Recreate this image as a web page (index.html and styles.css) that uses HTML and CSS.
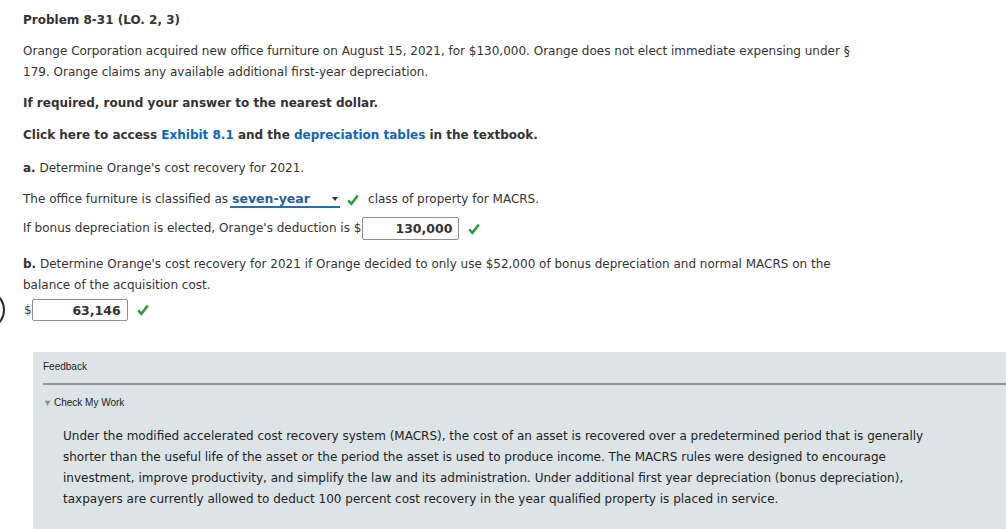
FILE: index.html
```html
<!DOCTYPE html>
<html>
<head>
<meta charset="utf-8">
<link rel="stylesheet" href="styles.css">
</head>
<body>
<div class="edge-circle"></div>
<div class="page">
  <div class="title">Problem 8-31 (LO. 2, 3)</div>
  <p class="para">Orange Corporation acquired new office furniture on August 15, 2021, for $130,000. Orange does not elect immediate expensing under §<br>179. Orange claims any available additional first-year depreciation.</p>
  <p class="bold p-req">If required, round your answer to the nearest dollar.</p>
  <p class="bold p-click">Click here to access <a class="link">Exhibit 8.1</a> and the <a class="link">depreciation tables</a> in the textbook.</p>
  <p class="p-a"><b>a.</b> Determine Orange's cost recovery for 2021.</p>
  <div class="row row-select">
    <span>The office furniture is classified as</span>
    <span class="select"><span class="sel-text">seven-year</span><span class="sel-arrow"></span></span>
    <svg class="check" viewBox="0 0 12 12"><path d="M1.2 6.4 L4.4 9.8 L10.8 1.6" fill="none" stroke="#1f9d3c" stroke-width="2.4"/></svg>
    <span class="after-check">class of property for MACRS.</span>
  </div>
  <div class="row row-bonus">
    <span>If bonus depreciation is elected, Orange's deduction is $</span>
    <span class="input input-a">130,000</span>
    <svg class="check check-b" viewBox="0 0 12 12"><path d="M1.2 6.4 L4.4 9.8 L10.8 1.6" fill="none" stroke="#1f9d3c" stroke-width="2.4"/></svg>
  </div>
  <p class="p-b"><b>b.</b> Determine Orange's cost recovery for 2021 if Orange decided to only use $52,000 of bonus depreciation and normal MACRS on the<br>balance of the acquisition cost.</p>
  <div class="row row-dollar">
    <span class="dollar">$</span>
    <span class="input input-b">63,146</span>
    <svg class="check check-c" viewBox="0 0 12 12"><path d="M1.2 6.4 L4.4 9.8 L10.8 1.6" fill="none" stroke="#1f9d3c" stroke-width="2.4"/></svg>
  </div>
</div>
<div class="feedback">
  <div class="fb-head">Feedback</div>
  <div class="fb-rule"></div>
  <div class="fb-toggle"><span class="tri">▼</span>Check My Work</div>
  <div class="fb-body">Under the modified accelerated cost recovery system (MACRS), the cost of an asset is recovered over a predetermined period that is generally<br>shorter than the useful life of the asset or the period the asset is used to produce income. The MACRS rules were designed to encourage<br>investment, improve productivity, and simplify the law and its administration. Under additional first year depreciation (bonus depreciation),<br>taxpayers are currently allowed to deduct 100 percent cost recovery in the year qualified property is placed in service.</div>
</div>
</body>
</html>
```
FILE: styles.css
```css
html, body {
  margin: 0;
  padding: 0;
  overflow: hidden;
  background: #fff;
}
body {
  font-family: "DejaVu Sans", Verdana, sans-serif;
  font-size: 12px;
  line-height: 21px;
  color: #333;
  position: relative;
  height: 529px;
}
.page {
  padding: 10px 0 0 23px;
}
.title {
  font-weight: bold;
  color: #333;
}
p { margin: 0; }
.para { margin-top: 10px; }
.bold { font-weight: bold; }
.p-req { margin-top: 10px; }
.p-click { margin-top: 11px; }
.link { color: #0a66c2; }
.p-a { margin-top: 12px; }
.row {
  display: flex;
  align-items: center;
}
.row-select {
  margin-top: 10px;
  height: 21px;
}
.select {
  display: inline-flex;
  align-items: center;
  justify-content: space-between;
  width: 110px;
  height: 17px;
  margin-left: 2px;
  border-bottom: 2px solid #2a6db0;
  box-sizing: border-box;
  color: #1d5fa3;
  font-weight: bold;
  font-size: 12.5px;
  padding-left: 2px;
}
.sel-arrow {
  width: 0;
  height: 0;
  border-left: 3.5px solid transparent;
  border-right: 3.5px solid transparent;
  border-top: 4px solid #333;
  margin-right: 2px;
}
.check {
  width: 12px;
  height: 12px;
  margin-left: 7px;
}
.after-check { margin-left: 9px; }
.row-bonus {
  margin-top: 7px;
  height: 23px;
}
.input {
  display: inline-flex;
  align-items: center;
  justify-content: flex-end;
  box-sizing: border-box;
  border: 1px solid #8f8f8f;
  border-radius: 2px;
  background: #fff;
  font-weight: bold;
  font-size: 12.5px;
  color: #333;
  padding-right: 6px;
}
.input-a {
  width: 97px;
  height: 23px;
  margin-left: 1px;
}
.check-b { margin-left: 9px; }
.p-b { margin-top: 14px; }
.row-dollar {
  margin-top: 3px;
  height: 22px;
}
.dollar {
  margin-left: 1px;
  color: #444;
}
.input-b {
  width: 96px;
  height: 22px;
}
.check-c { margin-left: 9px; }
.edge-circle {
  position: absolute;
  left: -35px;
  top: 290px;
  width: 40px;
  height: 40px;
  border: 2.5px solid #2a2a2a;
  border-radius: 50%;
  box-sizing: border-box;
}
.feedback {
  margin: 31px 0 0 33px;
  background: #dce4e7;
  height: 200px;
  font-family: "Liberation Sans", Arial, sans-serif;
  color: #222;
}
.fb-head {
  padding: 8px 0 0 10px;
  font-size: 10px;
  line-height: 14px;
  height: 23px;
}
.fb-rule {
  margin-left: 10px;
  border-top: 2px solid #8d9599;
}
.fb-toggle {
  padding: 11px 0 0 10px;
  font-size: 10px;
  line-height: 14px;
  display: flex;
  align-items: center;
}
.tri {
  color: #8a8f93;
  font-size: 9px;
  margin-right: 2px;
}
.fb-body {
  padding: 16px 0 0 30px;
  font-family: "DejaVu Sans", Verdana, sans-serif;
  font-size: 12px;
  line-height: 21px;
  color: #222;
}
```
